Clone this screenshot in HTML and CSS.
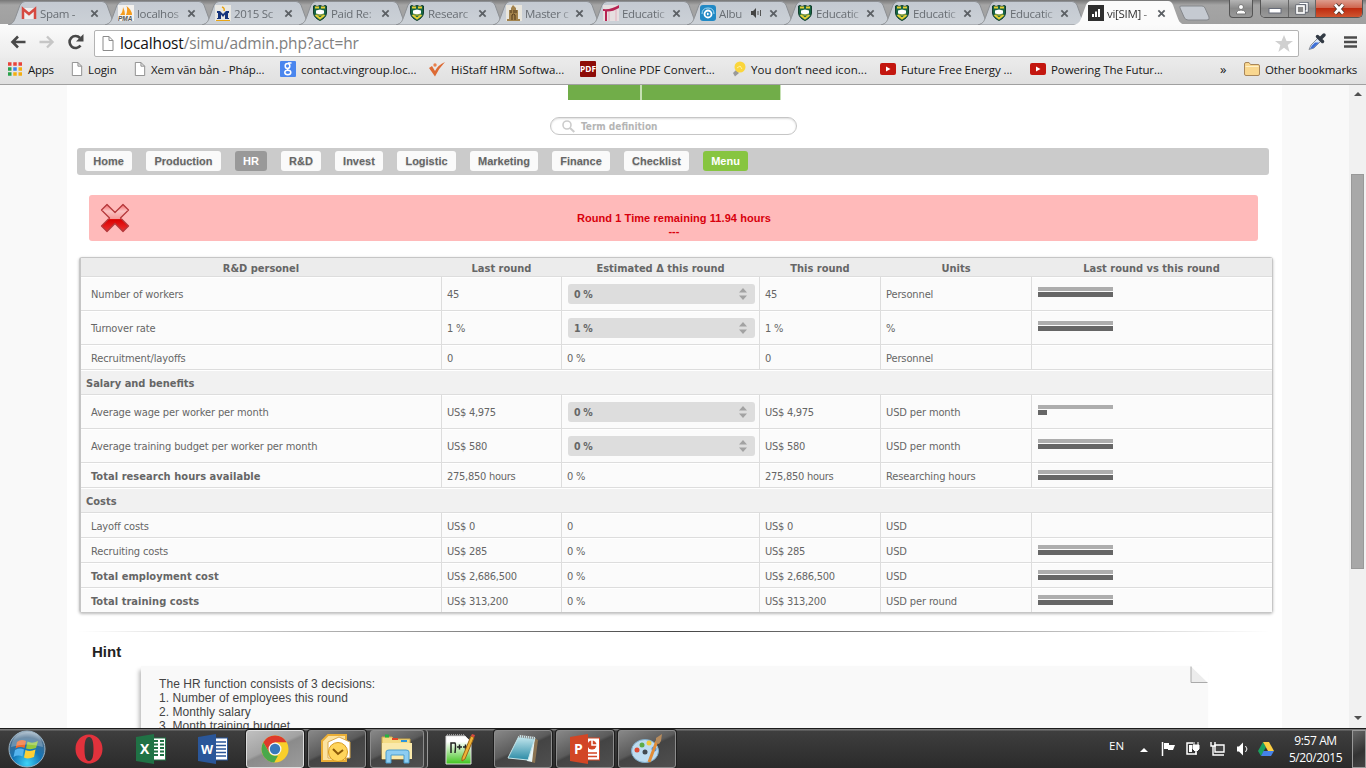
FILE: index.html
```html
<!DOCTYPE html>
<html lang="en">
<head>
<meta charset="utf-8">
<title>vi[SIM] - HR</title>
<link rel="stylesheet" href="styles.css">
</head>
<body>
<svg class="defs" width="0" height="0" aria-hidden="true">
  <defs>
    <linearGradient id="tabfill" x1="0" y1="0" x2="0" y2="1"><stop offset="0" stop-color="#c3c9d1"/><stop offset="1" stop-color="#ccd1d7"/></linearGradient>
    <linearGradient id="redx" x1="0" y1="0" x2="0" y2="1"><stop offset="0" stop-color="#f4696b"/><stop offset=".25" stop-color="#fbc3c3"/><stop offset=".52" stop-color="#f69a9a"/><stop offset=".56" stop-color="#dc0000"/><stop offset="1" stop-color="#e93535"/></linearGradient>
    <radialGradient id="orb" cx=".5" cy=".9" r=".9"><stop offset="0" stop-color="#3fd4f8"/><stop offset=".45" stop-color="#1476b8"/><stop offset=".8" stop-color="#426a8c"/><stop offset="1" stop-color="#a9bccb"/></radialGradient>
    <linearGradient id="pad" x1="0" y1="0" x2="0" y2="1"><stop offset="0" stop-color="#c9eaf0"/><stop offset="1" stop-color="#2a8ba6"/></linearGradient>
    <linearGradient id="npp" x1="0" y1="0" x2="0" y2="1"><stop offset=".2" stop-color="#fff"/><stop offset="1" stop-color="#3fc41c"/></linearGradient>
    <symbol id="tab" viewBox="0 0 115 25"><path d="M1 25C7 23 7 21 9 16L13 5Q15 1.500 18 1.500H95Q98.500 1.500 100 5L104 16C106 21 106 23 112 25Z" fill="url(#tabfill)" stroke="#8c8f93"/></symbol>
    <symbol id="x" viewBox="0 0 10 10"><path d="M1.500 1.500L8.500 8.500M8.500 1.500L1.500 8.500" stroke="#5c6065" stroke-width="2"/></symbol>
    <symbol id="page" viewBox="0 0 12 15"><path d="M1 .5H7L11 4.500V14.500H1Z M7 .5V4.500H11" fill="#fff" stroke="#8b8b8b"/></symbol>
    <symbol id="crest" viewBox="0 0 14 16"><path d="M.5 1L2 .5 4 1.500 7 .5 10 1.500 12 .5 13.500 1V8Q13 13 7 15.500Q1 13 .5 8Z" fill="#176543" stroke="#123d2c"/><path d="M2 2.500H6M8 2.500H12M2.500 10L7 13.500 11.500 10" stroke="#e6cf34" stroke-width="1.800" fill="none"/><path d="M3 5.500L7 4.500 11 5.500V8.500L7 9.500 3 8.500Z" fill="#fff"/><path d="M4 10H10" stroke="#d9c93c"/></symbol>
    <symbol id="yt" viewBox="0 0 16 12"><rect width="16" height="12" rx="2" fill="#c3160f"/><path d="M6 3.500V8.500L10.500 6Z" fill="#fff"/></symbol>
    <symbol id="spin" viewBox="0 0 8 12"><path d="M0 4.500L4 0 8 4.500ZM0 7.500H8L4 12Z" fill="#a2a2a2"/></symbol>
  </defs>
</svg>

<div class="screen">
<header class="tabs">
  <div class="strip">
    <div class="tab"><svg class="shape"><use href="#tab"/></svg><svg class="fav" viewBox="0 0 16 16"><path d="M1 3H15V14H1Z" fill="#eee"/><path d="M2 14V4L8 9 14 4V14" fill="none" stroke="#d64a41" stroke-width="2.500"/></svg><span class="name">Spam -</span><svg class="close"><use href="#x"/></svg></div>
    <div class="tab"><svg class="shape"><use href="#tab"/></svg><svg class="fav" viewBox="0 0 16 16"><rect width="16" height="16" fill="#f4f2ef"/><path d="M2 10Q5 7 5 2Q7 6 7 10M8 10Q10 5 8.500 1Q14 5 14 10Z" fill="#f59b1c"/><text x="0" y="16" class="pma">PMA</text></svg><span class="name">localhos</span><svg class="close"><use href="#x"/></svg></div>
    <div class="tab"><svg class="shape"><use href="#tab"/></svg><svg class="fav" viewBox="0 0 16 16"><rect width="16" height="16" fill="#e9e8e3"/><path d="M7 2Q10 3 9 6" stroke="#e9a516" fill="none" stroke-width="1.500"/><path d="M2 6H5L8 9 11 6H14V8H13V13H14V14H10V9.500L8 12 6 9.500V14H2V13H3V8H2Z" fill="#15347c"/><path d="M1 15.500H15" stroke="#e9a516"/></svg><span class="name">2015 Sc</span><svg class="close"><use href="#x"/></svg></div>
    <div class="tab"><svg class="shape"><use href="#tab"/></svg><svg class="fav"><use href="#crest"/></svg><span class="name">Paid Re:</span><svg class="close"><use href="#x"/></svg></div>
    <div class="tab"><svg class="shape"><use href="#tab"/></svg><svg class="fav"><use href="#crest"/></svg><span class="name">Researc</span><svg class="close"><use href="#x"/></svg></div>
    <div class="tab"><svg class="shape"><use href="#tab"/></svg><svg class="fav" viewBox="0 0 16 16"><rect width="16" height="16" fill="#e9e6dd"/><path d="M5 3L7 0 10 3V5H12V14H14V16H1V14H3V5H5Z" fill="#a2824c"/><path d="M6 15V10Q7.500 8 9 10V15M5 5V8M8 5V8M10 5V8" stroke="#4f371a" fill="none"/></svg><span class="name">Master c</span><svg class="close"><use href="#x"/></svg></div>
    <div class="tab"><svg class="shape"><use href="#tab"/></svg><svg class="fav" viewBox="0 0 16 16"><rect width="16" height="16" fill="#e6dfe0"/><path d="M0 4Q8 5 16 0V3Q9 7 4 6.500V16H2V6H0Z" fill="#b72353"/><path d="M6 7V16M13 5V16" stroke="#e4aebe"/></svg><span class="name">Educatic</span><svg class="close"><use href="#x"/></svg></div>
    <div class="tab"><svg class="shape"><use href="#tab"/></svg><svg class="fav" viewBox="0 0 16 16"><rect width="16" height="16" rx="3" fill="#2189c5"/><path d="M2 9Q2 3 8 3T14 9" fill="none" stroke="#a9dcf4"/><circle cx="8" cy="9" r="3.500" fill="#2189c5" stroke="#fff" stroke-width="1.800"/><path d="M7 7.500V10.500L9.500 9Z" fill="#fff"/></svg><span class="name short">Albu</span><svg class="sound" viewBox="0 0 11 10"><path d="M0 3H2L5 0V10L2 7H0Z" fill="#444"/><path d="M7 3V7M9.500 2V8" stroke="#555"/></svg><svg class="close"><use href="#x"/></svg></div>
    <div class="tab"><svg class="shape"><use href="#tab"/></svg><svg class="fav"><use href="#crest"/></svg><span class="name">Educatic</span><svg class="close"><use href="#x"/></svg></div>
    <div class="tab"><svg class="shape"><use href="#tab"/></svg><svg class="fav"><use href="#crest"/></svg><span class="name">Educatic</span><svg class="close"><use href="#x"/></svg></div>
    <div class="tab"><svg class="shape"><use href="#tab"/></svg><svg class="fav"><use href="#crest"/></svg><span class="name">Educatic</span><svg class="close"><use href="#x"/></svg></div>
    <div class="tab active"><svg class="shape" viewBox="0 0 115 25"><path d="M1 25C7 23 7 21 9 16L13 5Q15 1 18 1H95Q98.500 1 100 5L104 16C106 21 106 23 112 25Z" fill="#fbfbfb"/></svg><svg class="fav" viewBox="0 0 16 16"><rect width="16" height="16" fill="#2f2f2f"/><path d="M5 12V9M8 12V6.500M11 12V4" stroke="#fff" stroke-width="2"/></svg><span class="name">vi[SIM] -</span><svg class="close"><use href="#x"/></svg></div>
    <svg class="newtab" viewBox="0 0 34 16"><path d="M3 1H24Q26 1 27 3L31 12Q32 15 29 15H10Q7 15 6 12L2 3Q1 1 3 1Z" fill="#c5cad1" stroke="#84878b"/></svg>
  </div>
  <div class="caption">
    <span class="cap user"><svg width="12" height="12" viewBox="0 0 12 12"><circle cx="6" cy="4" r="2.500" fill="#fff" stroke="#777"/><path d="M1.500 11V9Q3 7 6 7T10.500 9V11Z" fill="#fff" stroke="#777"/></svg></span>
    <span class="capgroup"><span class="cap min"><svg width="14" height="6" viewBox="0 0 14 6"><rect x="1" y=".5" width="12" height="4.500" fill="#fff" stroke="#666b78"/></svg></span><span class="cap max"><svg width="14" height="13" viewBox="0 0 14 13"><path d="M4.500 1.500H12V9H9" fill="none" stroke="#525966" stroke-width="3"/><path d="M4.500 1.500H12V9H9" fill="none" stroke="#fff" stroke-width="1.500"/><rect x="2" y="4" width="7" height="7" fill="#777" stroke="#525966" stroke-width="3"/><rect x="2" y="4" width="7" height="7" fill="#888" stroke="#fff" stroke-width="1.700"/></svg></span><span class="cap shut"><svg width="14" height="12" viewBox="0 0 14 12"><path d="M3 1.500L11 10.500M11 1.500L3 10.500" stroke="#53382f" stroke-width="4.500"/><path d="M3 1.500L11 10.500M11 1.500L3 10.500" stroke="#fff" stroke-width="2.700"/></svg></span></span>
  </div>
</header>

<div class="toolbar">
  <svg class="nav back" viewBox="0 0 16 14"><path d="M15.500 7H3M8 1.500L2.500 7L8 12.500" fill="none" stroke="#484848" stroke-width="2.600"/></svg>
  <svg class="nav fwd" viewBox="0 0 16 14"><path d="M.5 7H13M8 1.500L13.500 7L8 12.500" fill="none" stroke="#c6c6c6" stroke-width="2.400"/></svg>
  <svg class="nav reload" viewBox="0 0 16 16"><path d="M12.500 11.500A6 6 0 1 1 12 4" fill="none" stroke="#484848" stroke-width="2.600"/><path d="M15.500 0V7.500H8Z" fill="#484848"/></svg>
  <div class="omni"><svg class="pg"><use href="#page"/></svg><span class="url"><b>localhost</b>/simu/admin.php?act=hr</span>
    <svg class="star" viewBox="0 0 18 17"><path d="M9 0L11.500 6H18L12.700 10L14.600 17L9 12.800 3.400 17 5.300 10 0 6H6.500Z" fill="#d0d0d0"/></svg></div>
  <svg class="dropper" viewBox="0 0 19 19"><path d="M1 17.500L3 13 10 6 13 9 6 16Z" fill="#dce8f8" stroke="#8a8f99"/><path d="M2 17L4 13.500 7 10.500H11L5.500 16Z" fill="#3b6ed8"/><path d="M9.500 4.500L14.500 9.500M12 7L16 3" stroke="#333b45" stroke-width="3.500" stroke-linecap="round"/></svg>
  <svg class="burger" viewBox="0 0 13 12"><path d="M0 1.500H13M0 6H13M0 10.500H13" stroke="#4c4c4c" stroke-width="2.600"/></svg>
</div>

<div class="marks">
  <span class="mk apps"><svg viewBox="0 0 14 14"><path d="M0 2H3.500M5.250 2H8.750M10.500 2H14" stroke="#e8433a" stroke-width="3.500"/><path d="M0 7H3.500M0 12H3.500" stroke="#2ba24c" stroke-width="3.500"/><path d="M5.250 7H8.750" stroke="#3b82ea" stroke-width="3.500"/><path d="M10.500 7H14M5.250 12H8.750M10.500 12H14" stroke="#f3ae12" stroke-width="3.500"/></svg><span>Apps</span></span>
  <span class="mk login"><svg><use href="#page"/></svg><span>Login</span></span>
  <span class="mk xem"><svg><use href="#page"/></svg><span>Xem văn bản - Pháp...</span></span>
  <span class="mk goog"><svg viewBox="0 0 16 16"><rect width="16" height="16" rx="1" fill="#4a86ee"/><ellipse cx="7.500" cy="5" rx="2.300" ry="2.500" fill="none" stroke="#fff" stroke-width="1.500"/><path d="M8 2H11.500M9 7Q6 8 8.500 9.500" fill="none" stroke="#fff" stroke-width="1.300"/><ellipse cx="7.800" cy="11.500" rx="3" ry="2.200" fill="none" stroke="#fff" stroke-width="1.500"/></svg><span>contact.vingroup.loc...</span></span>
  <span class="mk hi"><svg viewBox="0 0 16 16"><path d="M0 7L3 5 6 10Q9 4 16 1Q10 7 6 15.500Z" fill="#dd6b35"/><circle cx="6" cy="4" r="1.700" fill="#e9804b"/></svg><span>HiStaff HRM Softwa...</span></span>
  <span class="mk pdf"><svg viewBox="0 0 16 16"><rect width="16" height="16" rx="1" fill="#8d0c08"/><text x="0" y="11" class="pdft" textLength="16" lengthAdjust="spacingAndGlyphs">PDF</text></svg><span>Online PDF Convert...</span></span>
  <span class="mk bulb"><svg viewBox="0 0 16 16"><path d="M2 12L5 9 8 12 4 15.500Z" fill="#9a9a9a"/><circle cx="9" cy="6" r="5.500" fill="#fbd63c"/><path d="M6 7L9 5 11 8" fill="none" stroke="#fff2a3"/></svg><span>You don’t need icon...</span></span>
  <span class="mk fut"><svg viewBox="0 -2 16 16"><use href="#yt" width="16" height="12"/></svg><span>Future Free Energy ...</span></span>
  <span class="mk pow"><svg viewBox="0 -2 16 16"><use href="#yt" width="16" height="12"/></svg><span>Powering The Futur...</span></span>
  <span class="more">»</span>
  <span class="mk other"><svg viewBox="0 0 16 14"><path d="M.5 12V2Q.5 .5 2 .5H5L6.500 2.500H14Q15.500 2.500 15.500 4V12Q15.500 13.500 14 13.500H2Q.5 13.500 .5 12Z" fill="#f9d78f" stroke="#a8865a"/><path d="M1.500 4.500H14.500" stroke="#fff0c8"/></svg><span>Other bookmarks</span></span>
</div>

<div class="viewport">
  <main class="page">
    <div class="greenbar"><i></i><i></i></div>
    <div class="search"><svg viewBox="0 0 13 13"><circle cx="5" cy="5" r="4" fill="none" stroke="#ccc" stroke-width="1.600"/><path d="M8 8L12.300 12" stroke="#ccc" stroke-width="2"/></svg><span>Term definition</span></div>
    <nav class="menu">
      <a style="width:47px">Home</a><a style="width:75px">Production</a><a class="on" style="width:32px">HR</a><a style="width:40px">R&amp;D</a><a style="width:48px">Invest</a><a style="width:59px">Logistic</a><a style="width:68px">Marketing</a><a style="width:58px">Finance</a><a style="width:65px">Checklist</a><a class="go" style="width:45px">Menu</a>
    </nav>
    <div class="alert"><svg viewBox="0 0 30 30"><path d="M7 1.500L15 9.500 23 1.500 28.500 7 20.500 15 28.500 23 23 28.500 15 20.500 7 28.500 1.500 23 9.500 15 1.500 7Z" fill="url(#redx)" stroke="#b5383b" stroke-width="1.300" stroke-linejoin="round"/></svg>
      <p>Round 1 Time remaining 11.94 hours<br>---</p></div>

    <table class="grid">
      <colgroup><col class="c1"><col class="c2"><col class="c3"><col class="c4"><col class="c5"><col class="c6"></colgroup>
      <thead><tr><th>R&amp;D personel</th><th>Last round</th><th>Estimated Δ this round</th><th>This round</th><th>Units</th><th>Last round vs this round</th></tr></thead>
      <tbody>
        <tr class="tall"><td>Number of workers</td><td>45</td><td><div class="inp">0 %<svg><use href="#spin"/></svg></div></td><td>45</td><td>Personnel</td><td><div class="bars"><i></i><b></b></div></td></tr>
        <tr class="tall"><td>Turnover rate</td><td>1 %</td><td><div class="inp">1 %<svg><use href="#spin"/></svg></div></td><td>1 %</td><td>%</td><td><div class="bars"><i></i><b></b></div></td></tr>
        <tr><td>Recruitment/layoffs</td><td>0</td><td>0 %</td><td>0</td><td>Personnel</td><td></td></tr>
        <tr class="sec"><td colspan="6">Salary and benefits</td></tr>
        <tr class="tall"><td>Average wage per worker per month</td><td>US$ 4,975</td><td><div class="inp">0 %<svg><use href="#spin"/></svg></div></td><td>US$ 4,975</td><td>USD per month</td><td><div class="bars"><i></i><b style="width:9px"></b></div></td></tr>
        <tr class="tall"><td>Average training budget per worker per month</td><td>US$ 580</td><td><div class="inp">0 %<svg><use href="#spin"/></svg></div></td><td>US$ 580</td><td>USD per month</td><td><div class="bars"><i></i><b></b></div></td></tr>
        <tr><td class="strong">Total research hours available</td><td>275,850 hours</td><td>0 %</td><td>275,850 hours</td><td>Researching hours</td><td><div class="bars"><i></i><b></b></div></td></tr>
        <tr class="sec"><td colspan="6">Costs</td></tr>
        <tr><td>Layoff costs</td><td>US$ 0</td><td>0</td><td>US$ 0</td><td>USD</td><td></td></tr>
        <tr><td>Recruiting costs</td><td>US$ 285</td><td>0 %</td><td>US$ 285</td><td>USD</td><td><div class="bars"><i></i><b></b></div></td></tr>
        <tr><td class="strong">Total employment cost</td><td>US$ 2,686,500</td><td>0 %</td><td>US$ 2,686,500</td><td>USD</td><td><div class="bars"><i></i><b></b></div></td></tr>
        <tr class="last"><td class="strong">Total training costs</td><td>US$ 313,200</td><td>0 %</td><td>US$ 313,200</td><td>USD per round</td><td><div class="bars"><i></i><b></b></div></td></tr>
      </tbody>
    </table>
    <div class="rule"></div>
    <h2>Hint</h2>
    <div class="note"><svg class="fold" viewBox="0 0 18 18"><path d="M0 0H18V18Z" fill="#fff"/><path d="M1 .5V16.500H17.500Z" fill="#ececec"/><path d="M1 .5V16.500H17.500" fill="none" stroke="#aaa"/></svg>The HR function consists of 3 decisions:<br>1. Number of employees this round<br>2. Monthly salary<br>3. Month training budget</div>
  </main>
  <aside class="scroll"><svg viewBox="0 0 8 4"><path d="M0 4H8L4 0Z" fill="#505050"/></svg><div class="thumb"></div><svg class="down" viewBox="0 0 8 4"><path d="M0 0H8L4 4Z" fill="#505050"/></svg></aside>
</div>

<footer class="task">
  <svg class="start" viewBox="0 0 38 38"><circle cx="19" cy="19" r="18" fill="url(#orb)" stroke="#9cb4c5"/><path d="M9 12Q13 8.500 18 11L16.500 18Q12 16 7.500 18.500Z" fill="#ee6a2c"/><path d="M19.500 11.500Q24 14 30 11L28 18Q23 20 18 18.500Z" fill="#94c83d"/><path d="M7 20Q12 17.500 16 19.500L14.500 26.500Q10 24.500 5.500 27Z" fill="#55b4ee"/><path d="M17.500 20Q22 22 27.500 19.500L26 27Q20 29.500 16 27.500Z" fill="#fdd035"/><path d="M3 17Q5 3 19 2T35 17Q19 12 3 17" fill="#fff" opacity=".25"/></svg>
  <svg class="opera" viewBox="0 0 28 30"><path fill-rule="evenodd" d="M14 .5C6 .5 .5 7 .5 15S6 29.500 14 29.500 27.500 23 27.500 15 22 .5 14 .5ZM14 3C17.500 3 18.500 8 18.500 15S17.500 27 14 27 9.500 22 9.500 15 10.500 3 14 3Z" fill="#e1323c"/></svg>
  <svg class="excel" viewBox="0 0 30 30"><rect x="16" y="4" width="13.500" height="22" fill="#fff" stroke="#207245"/><path d="M18 7H22M24 7H28M18 10.500H22M24 10.500H28M18 14H22M24 14H28M18 17.500H22M24 17.500H28M18 21H22M24 21H28" stroke="#207245" stroke-width="2"/><path d="M0 3L18 0V30L0 27Z" fill="#207245"/><text x="4" y="20" class="office">X</text></svg>
  <svg class="word" viewBox="0 0 30 30"><rect x="16" y="4" width="13.500" height="22" fill="#fff" stroke="#2a5699"/><path d="M18 8H28M18 11.500H28M18 15H28M18 18.500H28M18 22H28" stroke="#2a5699" stroke-width="1.500"/><path d="M0 3L18 0V30L0 27Z" fill="#2a5699"/><text x="3" y="19.500" class="office w">W</text></svg>
  <div class="btn lit chrome"><svg width="28" height="28" viewBox="0 0 28 28"><circle cx="14" cy="14" r="13.500" fill="#f9cf2a"/><path d="M2.300 7.300A13.500 13.500 0 0 1 25.700 7.300H14L8.200 17.300Z" fill="#de3a2b"/><path d="M2.300 7.300L8.200 17.400Q10 20.700 14 20.700H17L13.200 27.500A13.500 13.500 0 0 1 2.300 7.300" fill="#4aa84b"/><circle cx="14" cy="14" r="6.500" fill="#f6f6f6"/><circle cx="14" cy="14" r="5.200" fill="#3878bb"/></svg></div>
  <div class="btn outlook"><svg width="32" height="30" viewBox="0 0 32 30"><path d="M1 27V7L7 1H25V27Z" fill="#fbe2a0" stroke="#e9ad36" stroke-width="2"/><path d="M7 8L18 3 29 8V24H7Z" fill="#fff" stroke="#d9a94c"/><circle cx="17" cy="18" r="9.500" fill="#ffd55c" stroke="#d89c23"/><path d="M12 15L17 20 22 16" stroke="#8b5a09" stroke-width="2" fill="none"/></svg></div>
  <div class="btn folder"><svg width="32" height="30" viewBox="0 0 32 30"><path d="M1 3H11L13 5H29V25H1Z" fill="#f4dc86" stroke="#cfaa48"/><path d="M4 2H8" stroke="#26b241" stroke-width="3"/><path d="M11 5H17" stroke="#e14727" stroke-width="2"/><path d="M20 7H26" stroke="#2b95dc" stroke-width="2"/><path d="M1 9H31V25H1Z" fill="#fae9ab"/><path d="M5 29V18Q5 16 8 16H25Q28 16 28 18V29H23V21H10V29Z" fill="#8dcdf2" stroke="#4a9ccc"/></svg></div>
  <svg class="npp" viewBox="0 0 30 32"><path d="M1 3H20L26 9V31H1Z" fill="url(#npp)" stroke="#ddd"/><path d="M2 2H19" stroke="#999" stroke-dasharray="1 1" stroke-width="2"/><path d="M6 20V10H10Q11 11 10 20M12 14H17M14.500 11.500V16.500M18 14H23M20.500 11.500V16.500" fill="none" stroke="#222" stroke-width="1.500"/><path d="M17 25L26 3 29 4.500 20 26 17 28Z" fill="#efb336" stroke="#9c6517"/><path d="M26 3L27 1 30 2 29 4.500Z" fill="#d94b3e"/></svg>
  <div class="btn note1"><svg width="32" height="30" viewBox="0 0 32 30"><path d="M25 3L31 6 28 29 24 28Z" fill="#8a7352"/><path d="M12 1L28 3 25 28 20 27Z" fill="#e6f4f6"/><path d="M12 2L28 4 21 26 1 24Z" fill="url(#pad)" stroke="#c6e5e9"/><path d="M12 2L28 4" stroke="#888" stroke-width="3" stroke-dasharray="1 1"/></svg></div>
  <div class="btn ppt"><svg width="30" height="30" viewBox="0 0 30 30"><rect x="16" y="4" width="13.500" height="22" fill="#fff" stroke="#d24625"/><circle cx="22" cy="11" r="4.500" fill="#d24625"/><path d="M22 6V11H27" stroke="#fff" stroke-width="1.500" fill="none"/><path d="M18 19H27M18 22.500H27" stroke="#d24625" stroke-width="1.500"/><path d="M0 3L18 0V30L0 27Z" fill="#d24625"/><text x="4" y="20" class="office">P</text></svg></div>
  <div class="btn paint"><svg width="32" height="32" viewBox="0 0 32 32"><ellipse cx="14" cy="18" rx="13.500" ry="11.500" fill="#bedcf0" stroke="#7faecb"/><circle cx="14" cy="19" r="2.500" fill="#424a50"/><circle cx="6" cy="17" r="2.500" fill="#de4b35"/><circle cx="11" cy="12" r="2.500" fill="#5dab45"/><circle cx="18" cy="10" r="2.500" fill="#f2c83c"/><circle cx="23" cy="16" r="2.500" fill="#4b8ee0"/><path d="M18 29L26 8" stroke="#e18d37" stroke-width="3"/><path d="M25 10L25 5 31 1 30 8 28 11Z" fill="#b68b5d"/></svg></div>
  <div class="tray">
    <span class="lang">EN</span>
    <svg class="t-up" viewBox="0 0 8 4"><path d="M0 4L4 0 8 4Z" fill="#fff"/></svg>
    <svg class="t-flag" viewBox="0 0 15 14"><path d="M1.500 0V14" stroke="#fff" stroke-width="1.500"/><path d="M3 1H8V3H14L12 8H7V7H3Z" fill="#fff"/></svg>
    <svg class="t-plug" viewBox="0 0 14 15"><path d="M7 2H1V13H10V11" fill="none" stroke="#fff" stroke-width="1.500"/><path d="M3 4V11H6V4Z" fill="#fff"/><path d="M7 4H13V8L11 10H9L7 8ZM8 1V4M12 1V4M10 10V14" fill="#fff" stroke="#fff"/></svg>
    <svg class="t-net" viewBox="0 0 15 14"><path d="M5 3H14V10H5Z" fill="#444" stroke="#fff" stroke-width="1.400"/><path d="M6 13H14M1 0V4H5V0M3 4V13H6" fill="none" stroke="#fff" stroke-width="1.400"/></svg>
    <svg class="t-vol" viewBox="0 0 12 14"><path d="M0 4.500H2L6 .5V13.500L2 9.500H0Z" fill="#fff"/><path d="M8.500 4Q11.500 7 8.500 10" fill="none" stroke="#fff"/></svg>
    <svg class="t-drive" viewBox="0 0 16 14"><path d="M5 0L8 5 3 14 0 9Z" fill="#1aa260"/><path d="M5 0H11L16 9H10Z" fill="#fdcf42"/><path d="M5.500 9H16L13 14H3Z" fill="#4582e8"/></svg>
    <div class="clock">9:57 AM<br>5/20/2015</div>
    <div class="peek"></div>
  </div>
</footer>
</div>
</body>
</html>
```
FILE: styles.css
```css
* { box-sizing: border-box; }
body { margin: 0; background: #fff; overflow: hidden; }
.defs { display: block; height: 0; }
.screen { width: 1366px; height: 768px; display: flex; flex-direction: column; overflow: hidden; font-family: "Open Sans", sans-serif; font-size: 12px; }
svg { display: block; flex: none; }

/* tab strip */
.tabs { height: 24px; flex: none; display: flex; justify-content: space-between; background: linear-gradient(#777, #a5a5a5 5px, #a0a0a0); }
.strip { display: flex; padding-left: 7px; }
.tab { width: 97px; height: 24px; position: relative; display: flex; align-items: center; padding: 2px 0 0 14px; color: #686d73; }
.tab .shape { position: absolute; left: 0; top: 0; width: 115px; height: 25px; z-index: 0; }
.tab > :not(.shape) { position: relative; z-index: 1; }
.tab.active { z-index: 2; color: #333; margin-left: -1px; padding-left: 15px; }
.fav { width: 16px; height: 16px; }
.name { width: 45px; flex: none; margin-left: 3px; white-space: nowrap; font-size: 11.500px; letter-spacing: -.3px; -webkit-mask-image: linear-gradient(90deg, #000 75%, rgba(0, 0, 0, .25)); mask-image: linear-gradient(90deg, #000 75%, rgba(0, 0, 0, .25)); }
.name.short { width: 27px; }
.sound { width: 11px; height: 10px; margin: 0 2px 0 5px; }
.close { width: 9px; height: 9px; margin-left: 5px; }
.pma { font: italic bold 6.500px "Liberation Sans", sans-serif; fill: #555; }
.newtab { width: 34px; height: 16px; margin: 5px 0 0 8px; }
.caption { display: flex; padding-right: 3px; gap: 7px; }
.capgroup { display: flex; height: 18px; border: 1px solid #555; border-top: 0; border-radius: 0 0 5px 5px; overflow: hidden; }
.cap { display: flex; align-items: center; justify-content: center; height: 17px; background: linear-gradient(#b5b5b5, #8a8a8a 50%, #999); }
.cap.user { width: 24px; height: 18px; border: 1px solid #555; border-top: 0; border-radius: 0 0 4px 4px; }
.cap.min { width: 28px; border-right: 1px solid #666; }
.cap.min svg { margin-top: 5px; }
.cap.max { width: 27px; border-right: 1px solid #666; }
.cap.shut { width: 46px; background: linear-gradient(#dd9c8d, #cf6650 45%, #bf2b10 50%, #cf5530); }

/* toolbar */
.toolbar { height: 34px; flex: none; display: flex; align-items: center; padding: 0 9px 0 10px; background: linear-gradient(#fbfbfb, #ececec); }
.nav { width: 16px; height: 14px; margin-top: 2px; }
.nav.fwd { margin-left: 13px; }
.nav.reload { height: 16px; margin-left: 13px; }
.omni { width: 1205px; height: 27px; margin: 4px 0 0 10px; border: 1px solid #b3b3b3; border-radius: 2px; background: #fff; display: flex; align-items: center; padding: 0 5px 0 7px; }
.pg { width: 12px; height: 15px; }
.url { margin-left: 6px; font-size: 15.500px; color: #808080; letter-spacing: -.13px; flex: 1; line-height: 20px; margin-top: -1px; }
.url b { font-weight: normal; color: #111; }
.star { width: 18px; height: 17px; }
.dropper { width: 19px; height: 19px; margin: 0 0 0 9px; }
.burger { width: 13px; height: 12px; margin: 2px 0 0 17px; }

/* bookmarks */
.marks { height: 27px; flex: none; display: flex; align-items: center; padding: 0 0 4px 8px; background: linear-gradient(#ebebeb, #e0e0e0); border-bottom: 1px solid #a0a0a0; color: #161616; font-size: 11.500px; white-space: nowrap; }
.mk { display: flex; align-items: center; gap: 5px; flex: none; letter-spacing: -.1px; }
.mk svg { width: 16px; height: 16px; }
.mk.apps { width: 62px; gap: 6px; letter-spacing: -.25px; }
.mk.apps svg, .mk.login svg, .mk.xem svg { width: 14px; height: 14px; }
.mk.login { width: 63px; }
.mk.login, .mk.xem { gap: 4px; }
.mk.xem { width: 147px; }
.mk.goog { width: 149px; }
.mk.hi { width: 151px; gap: 6px; letter-spacing: 0; }
.mk.pdf { width: 151px; letter-spacing: 0; }
.mk.bulb { width: 149px; gap: 4px; letter-spacing: .05px; }
.mk.fut { width: 150px; }
.mk.pow { width: 190px; }
.more { width: 24px; font-size: 13px; }
.mk.other svg { height: 14px; }
.mk.other { letter-spacing: -.15px; }
.pdft { font: bold 8px "Noto Sans", sans-serif; fill: #fff; }

/* page */
.viewport { height: 643px; flex: none; display: flex; justify-content: space-between; background: #f9f9f9; overflow: hidden; padding-left: 67px; }
.page { width: 1215px; height: 643px; background: #fff; overflow: hidden; font-family: "Liberation Sans", Arial, sans-serif; }
.greenbar { display: flex; gap: 2px; width: 213px; height: 15px; margin-left: 501px; background: #c6e0b4; padding-right: 1px; }
.greenbar i { background: #71ad49; width: 72px; }
.greenbar i + i { flex: 1; }
.search { width: 247px; height: 18px; margin: 17px 0 0 483px; border: 1px solid #c6c6c6; border-radius: 9px; box-shadow: inset 0 1px 2px #ddd; display: flex; align-items: center; gap: 6px; padding-left: 11px; color: #b5b5b5; font: bold 10px "DejaVu Sans Condensed", "DejaVu Sans", sans-serif; font-stretch: condensed; }
.search svg { width: 13px; height: 13px; margin-top: 1px; }
.menu { width: 1192px; height: 27px; margin: 13px 0 0 10px; padding: 3px 8px; display: flex; gap: 14px; background: #cbcbcb; border-radius: 3px; }
.menu a { height: 20px; border-radius: 3px; background: #fafafa; color: #666; font: bold 11px/20px "Liberation Sans", Arial, sans-serif; text-align: center; text-shadow: 0 1px 1px #ccc; }
.menu .on { background: #999; color: #fff; text-shadow: none; }
.menu .go { background: #87c540; color: #fff; text-shadow: none; }
.alert { width: 1169px; height: 46px; margin: 20px 0 0 22px; background: #ffbaba; border-radius: 3px; display: flex; padding: 8px 11px; color: #d8000c; font-weight: bold; font-size: 11px; line-height: 13px; text-align: center; letter-spacing: .07px; }
.alert svg { width: 30px; height: 30px; }
.alert p { margin: 9px 29px 0 0; flex: 1; }

.grid { width: 1194px; height: 356px; margin: 16px 0 0 12px; table-layout: fixed; border-collapse: separate; border-spacing: 0; border: 1px solid #c6c6c6; border-left-width: 2px; border-radius: 3px; box-shadow: 0 1px 3px #bbb; color: #666; font: 11px/13px "DejaVu Sans Condensed", "DejaVu Sans", sans-serif; font-stretch: condensed; }
.c1 { width: 361px; } .c2 { width: 120px; } .c3 { width: 198px; } .c4 { width: 121px; } .c5 { width: 151px; } .c6 { width: 240px; }
.grid th { height: 19px; padding: 2px 1px 0 0; background: #ececec; border-bottom: 1px solid #ddd; font-weight: bold; letter-spacing: 0; font-size: 11px; }
.grid td { height: 25px; padding: 2px 0 0 5px; border-bottom: 1px solid #ddd; border-right: 1px solid #ddd; background: #fbfbfb; box-shadow: inset 0 1px #fff; vertical-align: middle; white-space: nowrap; letter-spacing: -.27px; }
.grid td:first-child { padding-left: 10px; letter-spacing: -.12px; }
.grid td:nth-child(5) { letter-spacing: -.12px; }
.grid td:last-child { border-right: 0; vertical-align: top; padding: 7px 0 0 6px; }
.grid .tall td { height: 34px; }
.grid .tall td:last-child { padding-top: 10px; }
.grid .last td { height: 24px; border-bottom: 0; }
.grid .sec td { background: #f1f1f1; font-weight: bold; padding: 2px 0 0 5px; vertical-align: middle; letter-spacing: 0; }
.grid td.strong { font-weight: bold; letter-spacing: .05px; }
.inp { width: 187px; height: 20px; margin: -2px 0 0 1px; padding: 1px 8px 0 6px; display: flex; align-items: center; justify-content: space-between; background: #ddd; border-radius: 3px; font-weight: bold; font-size: 10.500px; }
.inp svg { width: 8px; height: 12px; }
.bars { display: flex; flex-direction: column; gap: 1px; width: 75px; }
.bars i { height: 4px; background: #adadad; }
.bars b { height: 5px; background: #666; }

.rule { width: 1192px; height: 1px; margin: 18px 0 0 11px; background: linear-gradient(90deg, transparent, #444 50%, transparent); }
h2 { margin: 11px 0 0 25px; font-size: 15px; line-height: 18px; color: #222; }
.note { position: relative; width: 1067px; height: 80px; margin: 5px 0 0 74px; padding: 11px 0 0 18px; background: #f9f9f9; box-shadow: -3px 3px 4px -1px #bbb; color: #444; font-size: 12px; line-height: 14px; letter-spacing: .07px; }
.fold { position: absolute; right: 0; top: 0; width: 18px; height: 18px; }
.scroll { width: 17px; background: #f1f1f1; display: flex; flex-direction: column; align-items: center; padding-top: 7px; }
.scroll svg { width: 8px; height: 4px; }
.thumb { width: 13px; height: 395px; margin-top: 78px; background: #a8a8a8; border: 1px solid #999; }
.scroll .down { margin-top: 147px; }

/* taskbar */
.task { height: 40px; flex: none; display: flex; align-items: center; padding-left: 8px; border-top: 1px solid #1c1c1c; background: linear-gradient(#777 0 1px, #3e3e3e 2px, #333 60%, #2b2b2b); }
.start { width: 38px; height: 38px; }
.opera { width: 28px; height: 30px; margin-left: 29px; }
.excel { width: 30px; height: 30px; margin-left: 33px; }
.word { width: 30px; height: 30px; margin-left: 32px; }
.office { font: bold 14px "Open Sans", sans-serif; fill: #fff; }
.office.w { font-size: 12.500px; }
.btn { width: 58px; height: 38px; flex: none; margin-left: 4px; border: 1px solid #8c8c8c; border-radius: 3px; box-shadow: 0 0 0 1px #1d1d1d; display: flex; align-items: center; justify-content: center; background: linear-gradient(155deg, #888 0, #5b5b5b 45%, #444 50%, #4f4f4f); }
.btn.lit { margin-left: 18px; border-color: #ddd; background: linear-gradient(155deg, #c0c0c0, #a2a2a2 45%, #8b8b8b 50%, #9b9b9b); }
.btn.folder { width: 54px; box-shadow: 3px 0 0 #3b3b3b, 4px 0 0 #999; }
.npp { width: 30px; height: 32px; margin-left: 21px; }
.btn.note1 { margin-left: 19px; }
.tray { flex: 1; display: flex; align-items: center; height: 39px; color: #fff; }
.lang { margin: -6px 0 0 433px; font-size: 11.500px; width: 15px; flex: none; }
.t-up { width: 8px; height: 4px; margin: 2px 0 0 16px; }
.t-flag { width: 15px; height: 14px; margin-left: 13px; }
.t-plug { width: 14px; height: 15px; margin-left: 10px; }
.t-net { width: 15px; height: 14px; margin-left: 10px; }
.t-vol { width: 12px; height: 14px; margin-left: 12px; }
.t-drive { width: 16px; height: 14px; margin-left: 9px; }
.clock { width: 73px; flex: none; margin-left: 5px; text-align: center; font-size: 12px; line-height: 17px; letter-spacing: -.4px; }
.peek { width: 14px; flex: none; height: 38px; margin-left: auto; border: 1px solid #999; background: linear-gradient(150deg, #666, #333 60%, #444); }
```
